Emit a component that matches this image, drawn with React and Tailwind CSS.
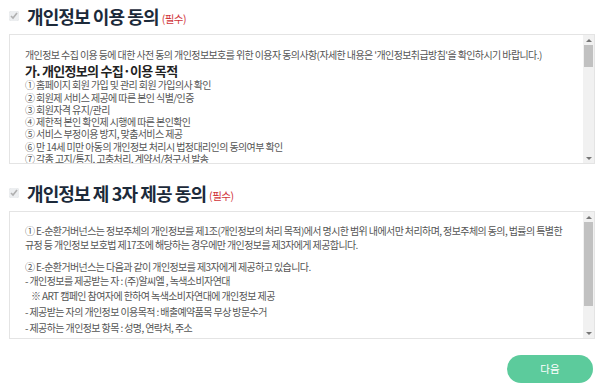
import React, { useState } from "react";

const FONT = { fontFamily: '"Noto Sans CJK KR", "Noto Sans", sans-serif' };

const SectionTitle = ({ title, checked, onToggle }) => (
  <label className="flex items-center gap-[8px] h-[30px] cursor-pointer">
    <input
      type="checkbox"
      checked={checked}
      onChange={onToggle}
      className="w-[10px] h-[10px] accent-gray-300 opacity-40"
    />
    <span className="text-[18px] font-bold text-[#1c2a3a] tracking-[-0.9px]">{title}</span>
    <span className="text-[10.5px] text-[#d0343a] mt-[5px] -ml-[5px] tracking-[-0.5px]">(필수)</span>
  </label>
);

// fake scrollbar so it shows in the screenshot
const ScrollBar = ({ thumbTop, thumbHeight }) => (
  <div className="w-[11px] flex flex-col bg-[#f1f1f1] shrink-0">
    <div className="h-[10px] flex items-center justify-center">
      <div className="w-0 h-0 border-x-[3px] border-x-transparent border-b-[3px] border-b-[#777]" />
    </div>
    <div className="flex-1 px-[1px]">
      <div className="bg-[#c1c1c1]" style={{ marginTop: thumbTop, height: thumbHeight }} />
    </div>
    <div className="h-[10px] flex items-center justify-center">
      <div className="w-0 h-0 border-x-[3px] border-x-transparent border-t-[3px] border-t-[#777]" />
    </div>
  </div>
);

export default function App() {
  const [agree1, setAgree1] = useState(true);
  const [agree2, setAgree2] = useState(true);

  return (
    <div className="w-[600px] h-[387px] bg-white overflow-hidden" style={FONT}>
      <div className="pt-[1px] pl-[9px] pr-[5px]">
        <SectionTitle title="개인정보 이용 동의" checked={agree1} onToggle={() => setAgree1(!agree1)} />

        <div className="mt-[3px] h-[130px] border border-[#e4e4e4] flex">
          <div className="flex-1 overflow-hidden text-[10px] leading-[12.3px] tracking-[-0.6px] text-[#555] pl-[15px] pr-[10px] pt-[14px]">
            <p>개인정보 수집 이용 등에 대한 사전 동의 개인정보보호를 위한 이용자 동의사항(자세한 내용은 '개인정보취급방침'을 확인하시기 바랍니다.)</p>
            <p className="text-[13px] leading-[16px] font-bold text-[#222] tracking-[-0.7px] mt-[2px]">가. 개인정보의 수집·이용 목적</p>
            <p>① 홈페이지 회원 가입 및 관리 회원 가입의사 확인</p>
            <p>② 회원제 서비스 제공에 따른 본인 식별/인증</p>
            <p>③ 회원자격 유지/관리</p>
            <p>④ 제한적 본인 확인제 시행에 따른 본인확인</p>
            <p>⑤ 서비스 부정이용 방지, 맞춤서비스 제공</p>
            <p>⑥ 만 14세 미만 아동의 개인정보 처리시 법정대리인의 동의여부 확인</p>
            <p>⑦ 각종 고지/통지, 고충처리, 계약서/청구서 발송</p>
            <p>⑧ 신규 서비스 개발 및 맞춤 서비스 제공</p>
          </div>
          <ScrollBar thumbTop={0} thumbHeight={22} />
        </div>

        <div className="mt-[14px]">
          <SectionTitle title="개인정보 제 3자 제공 동의" checked={agree2} onToggle={() => setAgree2(!agree2)} />
        </div>

        <div className="mt-[3px] h-[128px] border border-[#e4e4e4] flex">
          <div className="flex-1 overflow-hidden text-[10px] leading-[14.4px] tracking-[-0.6px] text-[#555] pl-[15px] pr-[14px] pt-[12px]">
            <p>① E-순환거버넌스는 정보주체의 개인정보를 제1조(개인정보의 처리 목적)에서 명시한 범위 내에서만 처리하며, 정보주체의 동의, 법률의 특별한 규정 등 개인정보 보호법 제17조에 해당하는 경우에만 개인정보를 제3자에게 제공합니다.</p>
            <p className="mt-[7px]">② E-순환거버넌스는 다음과 같이 개인정보를 제3자에게 제공하고 있습니다.</p>
            <p>- 개인정보를 제공받는 자 : (주)알씨엘 , 녹색소비자연대</p>
            <p className="pl-[6px]">※ ART 캠페인 참여자에 한하여 녹색소비자연대에 개인정보 제공</p>
            <p className="mt-[2px]">- 제공받는 자의 개인정보 이용목적 : 배출예약품목 무상 방문수거</p>
            <p className="mt-[2px]">- 제공하는 개인정보 항목 : 성명, 연락처, 주소</p>
            <p className="mt-[2px]">- 제공받는 자의 보유·이용기간 : 서비스 이용 완료 시까지</p>
          </div>
          <ScrollBar thumbTop={0} thumbHeight={84} />
        </div>

        <div className="flex justify-end mt-[16px] pr-[2px]">
          <button className="w-[86px] h-[28px] rounded-full bg-[#5ccb9c] text-white text-[10.5px]">
            다음
          </button>
        </div>
      </div>
    </div>
  );
}
